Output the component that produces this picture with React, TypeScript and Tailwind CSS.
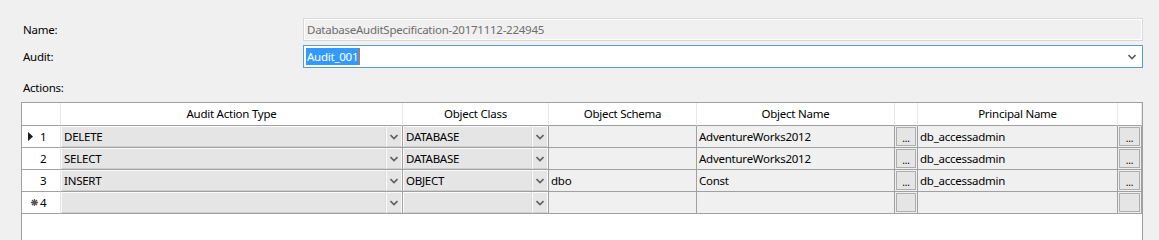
import React from "react";

type Row = {
  num: string;
  marker: "current" | "new" | null;
  action: string;
  objClass: string;
  schema: string;
  objName: string;
  principal: string;
  empty?: boolean;
};

const rows: Row[] = [
  { num: "1", marker: "current", action: "DELETE", objClass: "DATABASE", schema: "", objName: "AdventureWorks2012", principal: "db_accessadmin" },
  { num: "2", marker: null, action: "SELECT", objClass: "DATABASE", schema: "", objName: "AdventureWorks2012", principal: "db_accessadmin" },
  { num: "3", marker: null, action: "INSERT", objClass: "OBJECT", schema: "dbo", objName: "Const", principal: "db_accessadmin" },
  { num: "4", marker: "new", action: "", objClass: "", schema: "", objName: "", principal: "", empty: true },
];

const cols = "grid-cols-[39px_342px_146px_148px_198px_23px_200px_24px]";

function Chevron({ className = "" }: { className?: string }) {
  return (
    <svg className={className} width="8" height="6" viewBox="0 0 8 6" aria-hidden="true">
      <path d="M0.5 1 L4 4.5 L7.5 1" fill="none" stroke="#606060" strokeWidth="1.6" />
    </svg>
  );
}

function ComboCell({ text }: { text: string }) {
  return (
    <div className="flex h-[22px] border-r border-b border-[#a0a0a0] bg-[#f0f0f0]">
      <div className="flex flex-1 items-center border border-[#fbfbfb] border-r-[#dcdcdc] border-b-[#cfcfcf] bg-[#e5e5e5] pl-[2px]">
        {text}
      </div>
      <div className="flex w-[16px] items-center justify-center border border-[#fbfbfb] border-b-[#cfcfcf] bg-[#e5e5e5]">
        <Chevron />
      </div>
    </div>
  );
}

function TextCell({ text }: { text: string }) {
  return (
    <div className="flex h-[22px] items-center border-r border-b border-[#a0a0a0] bg-[#f0f0f0] pl-[2px]">
      {text}
    </div>
  );
}

function ButtonCell({ dots }: { dots: boolean }) {
  return (
    <div className="flex h-[22px] border-r border-b border-[#a0a0a0] bg-[#f0f0f0] p-[1px]">
      <div className="flex flex-1 items-end justify-center border border-[#adadad] bg-[#e5e5e5] pb-[1px] text-[10px] leading-[12px]">
        {dots ? "..." : ""}
      </div>
    </div>
  );
}

function RowHeader({ row }: { row: Row }) {
  return (
    <div className="flex h-[22px] items-center border-r border-b border-r-[#dde6f0] border-b-[#a0a0a0] bg-white pl-[6px]">
      <div className="flex w-[12px] items-center justify-start">
        {row.marker === "current" && (
          <svg width="5" height="9" viewBox="0 0 5 9" aria-hidden="true">
            <path d="M0 0 L5 4.5 L0 9 Z" fill="#1a1a1a" />
          </svg>
        )}
        {row.marker === "new" && (
          <svg className="ml-[3px]" width="7" height="7" viewBox="0 0 7 7" aria-hidden="true">
            <path d="M3.5 0 V7 M0 3.5 H7 M1 1 L6 6 M6 1 L1 6" stroke="#555" strokeWidth="1.3" />
          </svg>
        )}
      </div>
      <span>{row.num}</span>
    </div>
  );
}

export default function App() {
  const headers = ["", "Audit Action Type", "Object Class", "Object Schema", "Object Name", "", "Principal Name", ""];
  return (
    <div
      className="h-[240px] w-[1159px] overflow-hidden bg-[#f0f0f0] pl-[21px] pr-[16px] text-[11.5px] tracking-[-0.25px] text-black"
      style={{ fontFamily: '"Noto Sans", "Segoe UI", sans-serif' }}
    >
      <div className="mt-[18px] flex h-[23px] items-center">
        <div className="w-[282px] pl-[2px]">Name:</div>
        <div className="flex h-full flex-1 items-center border border-[#d9d9d9] bg-[#f0f0f0] pl-[3px] text-[#6d6d6d] shadow-[inset_1px_1px_0_#ffffff,inset_-1px_-1px_0_#ffffff]">
          DatabaseAuditSpecification-20171112-224945
        </div>
      </div>

      <div className="mt-[4px] flex h-[23px] items-center">
        <div className="w-[282px] pl-[2px]">Audit:</div>
        <div className="flex h-full flex-1 items-center border border-[#5b9bd5] bg-white pl-[2px] pr-[6px]">
          <span className="bg-[#3399ff] px-[1px] leading-[17px] text-white">Audit_001</span>
          <span className="h-[17px] w-[1px] bg-[#e07020]" />
          <span className="flex-1" />
          <Chevron className="mt-[1px]" />
        </div>
      </div>

      <div className="mt-[12px] h-[16px] pl-[2px] leading-[16px]">Actions:</div>

      <div className="mt-[6px] h-[200px] border-t border-l border-r border-[#a0a0a0] bg-white">
        <div className={`grid ${cols}`}>
          {headers.map((h, i) => (
            <div
              key={i}
              className="flex h-[23px] items-center justify-center border-r border-b border-r-[#e3e9f1] border-b-[#a0a0a0] bg-white"
            >
              {h}
            </div>
          ))}
          {rows.map((r) => (
            <React.Fragment key={r.num}>
              <RowHeader row={r} />
              <ComboCell text={r.action} />
              <ComboCell text={r.objClass} />
              <TextCell text={r.schema} />
              <TextCell text={r.objName} />
              <ButtonCell dots={!r.empty} />
              <TextCell text={r.principal} />
              <ButtonCell dots={!r.empty} />
            </React.Fragment>
          ))}
        </div>
      </div>
    </div>
  );
}
